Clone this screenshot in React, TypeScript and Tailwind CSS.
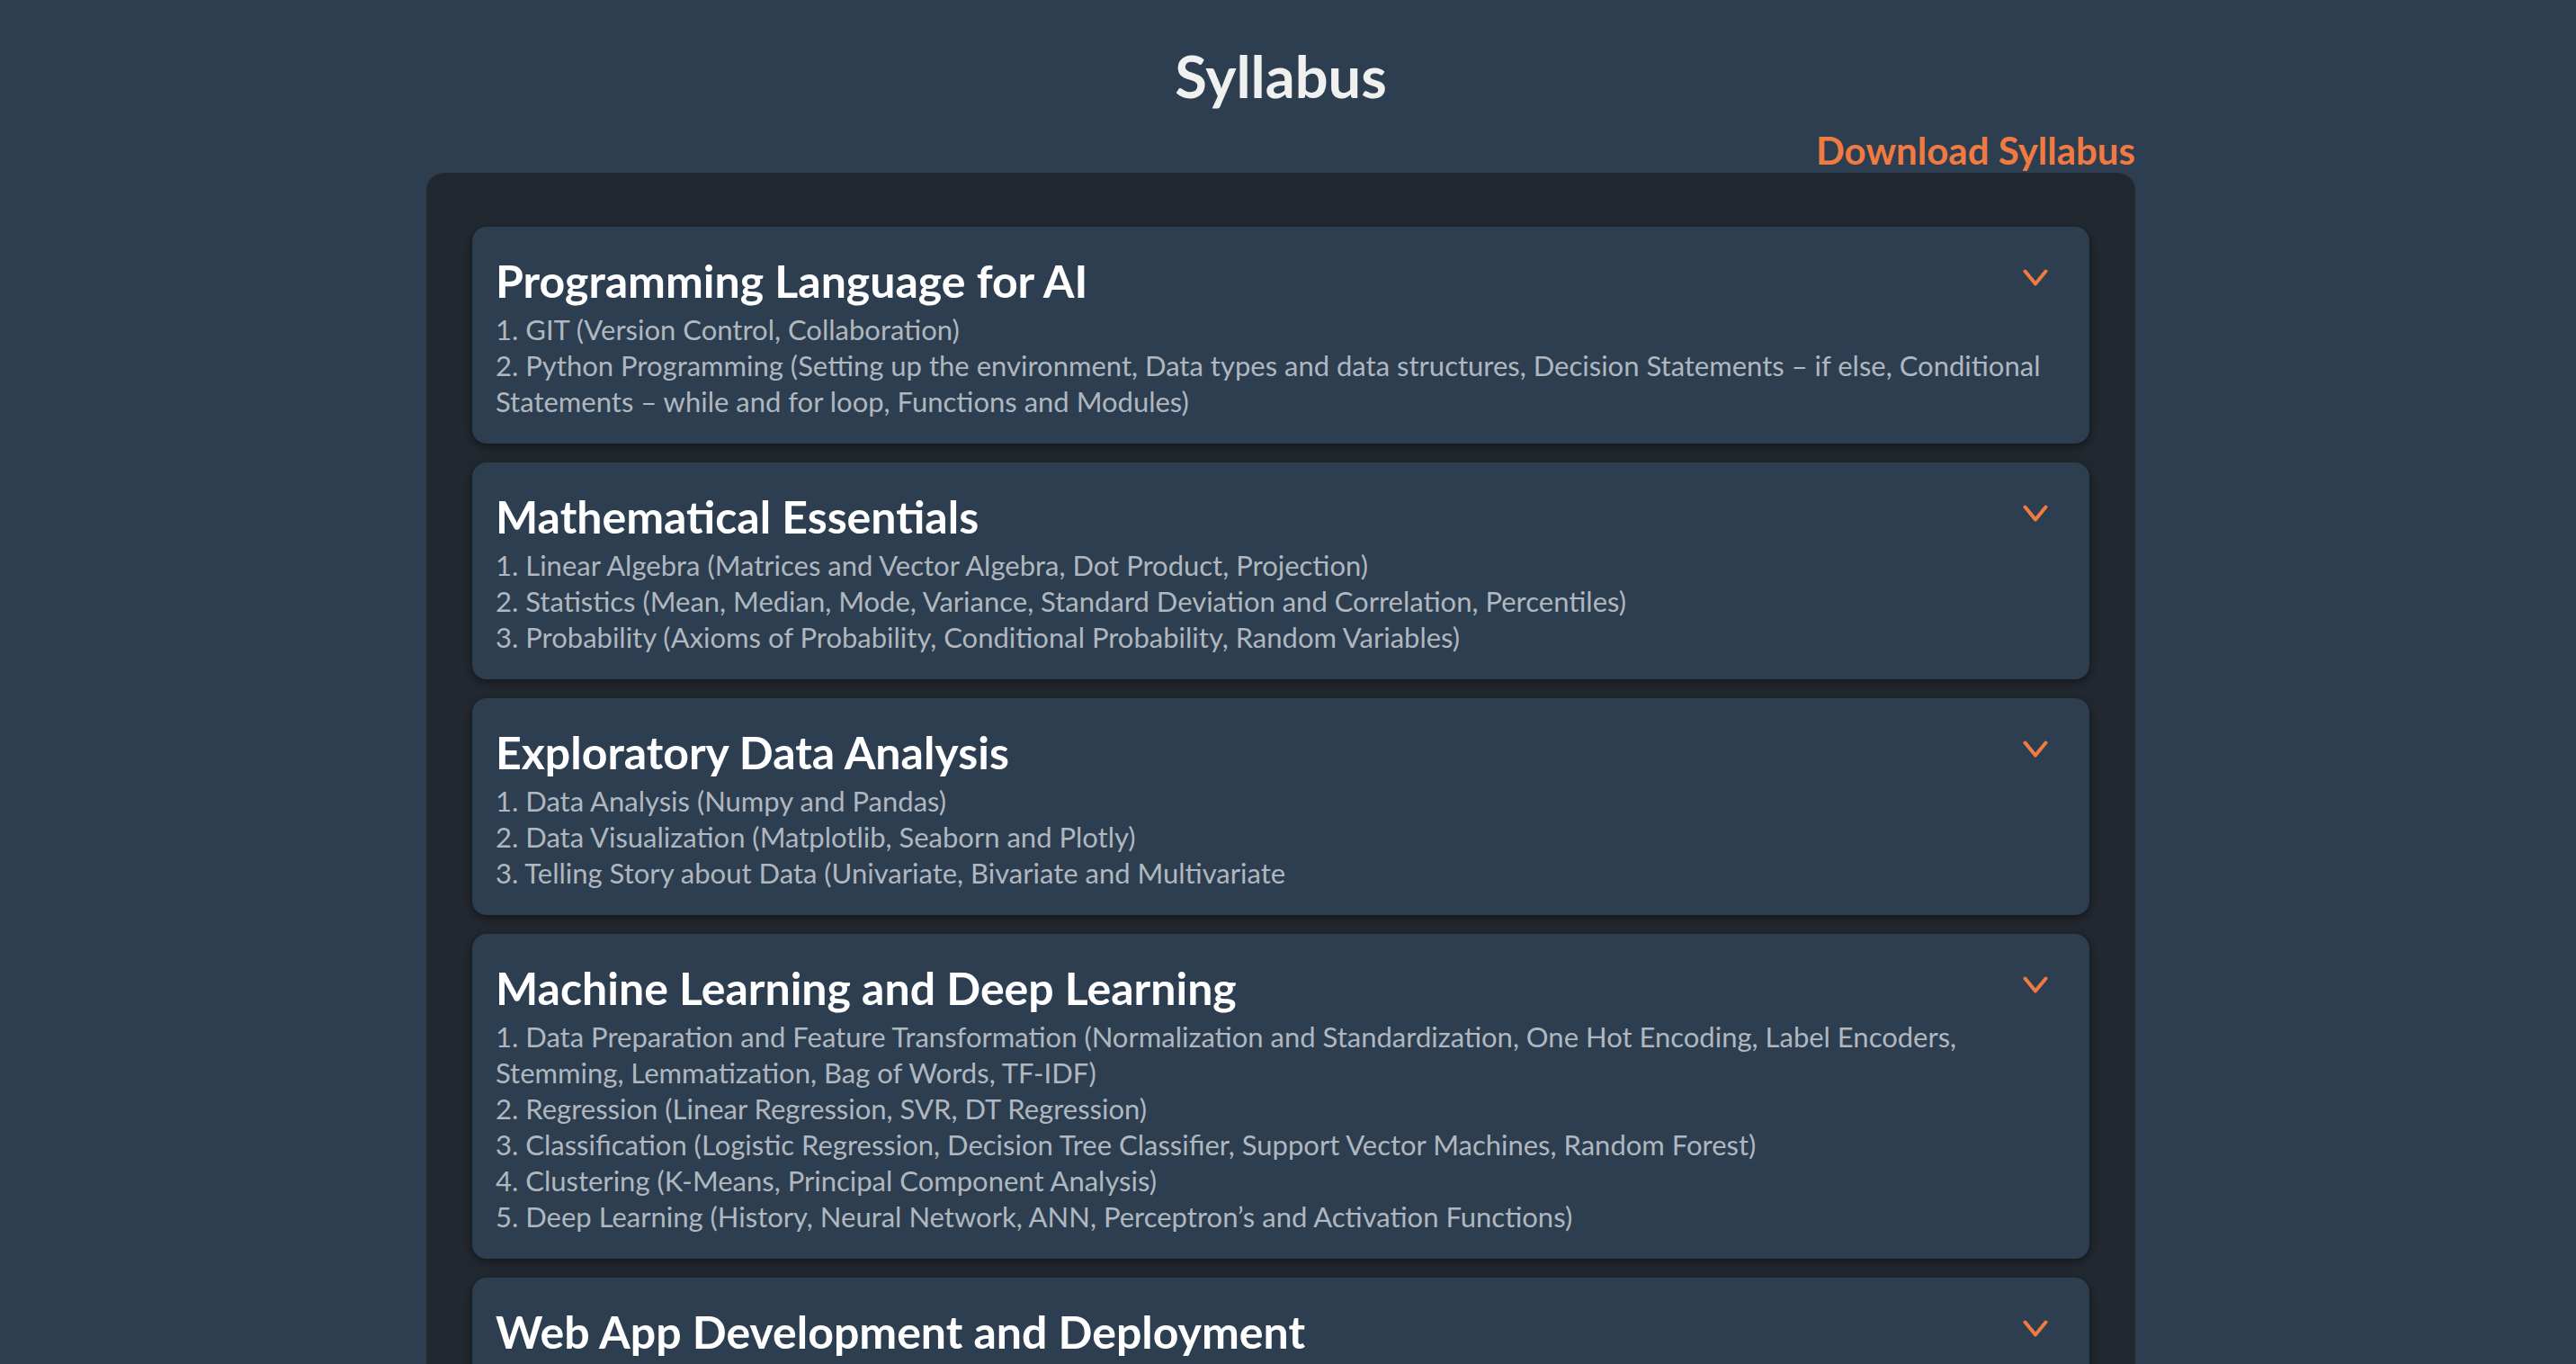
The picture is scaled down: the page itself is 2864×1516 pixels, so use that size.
const MODULES = [
  {
    title: 'Programming Language for AI',
    items: [
      '1. GIT (Version Control, Collaboration)',
      '2. Python Programming (Setting up the environment, Data types and data structures, Decision Statements – if else, Conditional Statements – while and for loop, Functions and Modules)',
    ],
  },
  {
    title: 'Mathematical Essentials',
    items: [
      '1. Linear Algebra (Matrices and Vector Algebra, Dot Product, Projection)',
      '2. Statistics (Mean, Median, Mode, Variance, Standard Deviation and Correlation, Percentiles)',
      '3. Probability (Axioms of Probability, Conditional Probability, Random Variables)',
    ],
  },
  {
    title: 'Exploratory Data Analysis',
    items: [
      '1. Data Analysis (Numpy and Pandas)',
      '2. Data Visualization (Matplotlib, Seaborn and Plotly)',
      '3. Telling Story about Data (Univariate, Bivariate and Multivariate',
    ],
  },
  {
    title: 'Machine Learning and Deep Learning',
    items: [
      '1. Data Preparation and Feature Transformation (Normalization and Standardization, One Hot Encoding, Label Encoders, Stemming, Lemmatization, Bag of Words, TF-IDF)',
      '2. Regression (Linear Regression, SVR, DT Regression)',
      '3. Classification (Logistic Regression, Decision Tree Classifier, Support Vector Machines, Random Forest)',
      '4. Clustering (K-Means, Principal Component Analysis)',
      '5. Deep Learning (History, Neural Network, ANN, Perceptron’s and Activation Functions)',
    ],
  },
  {
    title: 'Web App Development and Deployment',
    items: [
      '1. Web App Development (Flask, Streamlit)',
      '2. Deployment (Cloud Hosting, APIs)',
    ],
  },
]

function Chevron() {
  return (
    <svg width="28" height="19" viewBox="0 0 28 19" fill="none" className="absolute top-[47px] right-[46px]">
      <polyline points="2.5,2.5 14,16.5 25.5,2.5" stroke="#f07a40" strokeWidth="4" strokeLinecap="round" strokeLinejoin="round" />
    </svg>
  )
}

function ModuleCard({ title, items }: { title: string; items: string[] }) {
  return (
    <div className="relative bg-[#2c3e50] rounded-[16px] shadow-[0_3px_10px_rgba(0,0,0,0.45)] pt-[33px] pb-[27px] px-[26px]">
      <h3 className="text-[50px] leading-[54px] font-bold text-white mb-[7px]">{title}</h3>
      {items.map((item) => (
        <p key={item} className="text-[31px] leading-[40px] text-[#b0b7bf]">{item}</p>
      ))}
      <Chevron />
    </div>
  )
}

export default function App() {
  return (
    <div className="h-[1516px] overflow-hidden bg-[#2c3e50] pr-[16px]" style={{ fontFamily: 'Lato, "Noto Sans", sans-serif' }}>
      <div className="w-[1900px] mx-auto pt-[44px]">
        <h1 className="text-center text-[65px] leading-[80px] font-bold text-[#f0f0f0]">Syllabus</h1>
        <div className="flex justify-end mt-[19px] mb-[1px]">
          <a href="#" className="text-[42px] leading-[48px] font-bold text-[#f07a40]">Download Syllabus</a>
        </div>
        <div className="bg-[#22282f] rounded-[20px] pt-[60px] pb-[40px] px-[51px] flex flex-col gap-[21px]">
          {MODULES.map((m) => (
            <ModuleCard key={m.title} title={m.title} items={m.items} />
          ))}
        </div>
      </div>
    </div>
  )
}
